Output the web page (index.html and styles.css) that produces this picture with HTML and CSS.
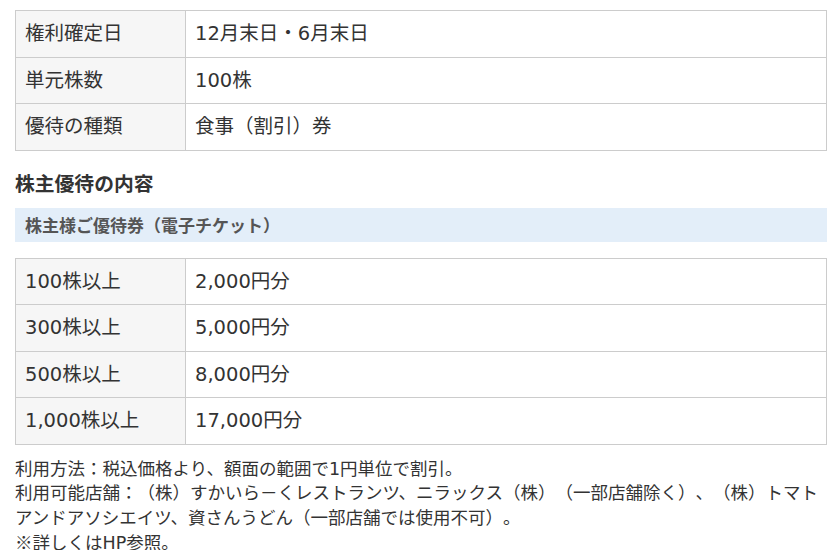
FILE: index.html
```html
<!DOCTYPE html>
<html lang="ja">
<head>
<meta charset="utf-8">
<link rel="stylesheet" href="styles.css">
</head>
<body>
<div class="page">
  <table class="info">
    <tr><th>権利確定日</th><td>12月末日・6月末日</td></tr>
    <tr><th>単元株数</th><td>100株</td></tr>
    <tr><th>優待の種類</th><td>食事（割引）券</td></tr>
  </table>
  <h3 class="heading">株主優待の内容</h3>
  <div class="subhead">株主様ご優待券（電子チケット）</div>
  <table class="info">
    <tr><th>100株以上</th><td>2,000円分</td></tr>
    <tr><th>300株以上</th><td>5,000円分</td></tr>
    <tr><th>500株以上</th><td>8,000円分</td></tr>
    <tr><th>1,000株以上</th><td>17,000円分</td></tr>
  </table>
  <p class="notes">利用方法：税込価格より、額面の範囲で1円単位で割引。<br>利用可能店舗：（株）すかいら－くレストランツ、ニラックス（株）（一部店舗除く）、（株）トマトアンドアソシエイツ、資さんうどん（一部店舗では使用不可）。<br><span class="cjk">※</span>詳しくはHP参照。</p>
</div>
</body>
</html>
```

FILE: styles.css
```css
html, body {
  margin: 0;
  padding: 0;
  background: #ffffff;
}
body {
  font-family: "DejaVu Sans", "Noto Sans CJK JP", sans-serif;
  color: #333333;
  text-spacing-trim: space-all;
}
.cjk {
  font-family: "Noto Sans CJK JP", sans-serif;
}
.page {
  padding: 10px 8px 0 15px;
}
.info {
  width: 812px;
  border-collapse: collapse;
  font-size: 19.5px;
}
.info th, .info td {
  border: 1px solid #cccccc;
  padding: 10px 9px;
  line-height: 25.5px;
  text-align: left;
  font-weight: normal;
  vertical-align: middle;
}
.info th {
  width: 151px;
  background: #f6f6f6;
}
.heading {
  margin: 18px 0 11px 0;
  font-size: 19.8px;
  line-height: 28px;
  font-weight: bold;
  color: #333333;
  font-family: "Noto Sans CJK JP", sans-serif;
}
.subhead {
  background: #e3eef9;
  height: 34px;
  line-height: 34px;
  padding-left: 10px;
  font-size: 17px;
  font-weight: bold;
  color: #555555;
  margin-bottom: 16px;
  font-family: "Noto Sans CJK JP", sans-serif;
}
.notes {
  margin: 12px 0 0 0;
  font-size: 17.5px;
  line-height: 24.5px;
}
```
